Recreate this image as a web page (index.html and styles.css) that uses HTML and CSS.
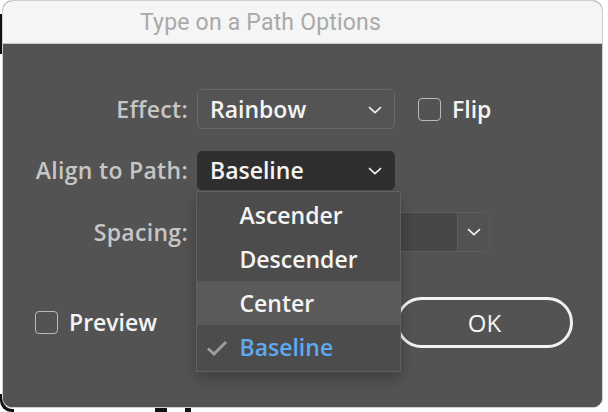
FILE: index.html
```html
<!DOCTYPE html>
<html>
<head>
<meta charset="utf-8">
<link rel="stylesheet" href="styles.css">
</head>
<body>
<div class="desk">
  <div class="art art-a"></div>
  <div class="art art-b"></div>
  <div class="art art-c"></div>
  <div class="art art-d"></div>
  <div class="window">
    <div class="titlebar"><span class="title">Type on a Path Options</span></div>
    <div class="content">
      <div class="form">
        <label class="lbl">Effect:</label>
        <div class="select">
          <span class="val">Rainbow</span>
          <svg class="chev" width="14" height="8" viewBox="0 0 14 8"><path d="M1 1.2 L7 6.6 L13 1.2" fill="none" stroke="#f2f2f2" stroke-width="1.6"/></svg>
        </div>
        <div class="check"><span class="box"></span><span class="ctext">Flip</span></div>

        <label class="lbl">Align to Path:</label>
        <div class="select dark anchor">
          <span class="val">Baseline</span>
          <svg class="chev" width="14" height="8" viewBox="0 0 14 8"><path d="M1 1.2 L7 6.6 L13 1.2" fill="none" stroke="#f2f2f2" stroke-width="1.6"/></svg>
          <ul class="menu">
            <li class="item">Ascender</li>
            <li class="item">Descender</li>
            <li class="item hover">Center</li>
            <li class="item sel"><svg class="tick" width="22" height="16" viewBox="0 0 22 16"><path d="M2 8.5 L8 14 L20 2" fill="none" stroke="#9d9d9d" stroke-width="3"/></svg>Baseline</li>
          </ul>
        </div>
        <div></div>

        <label class="lbl">Spacing:</label>
        <div class="combo">
          <span class="cinput"></span>
          <span class="cbtn"><svg width="14" height="8" viewBox="0 0 14 8"><path d="M1 1.2 L7 6.6 L13 1.2" fill="none" stroke="#f2f2f2" stroke-width="1.6"/></svg></span>
        </div>
        <div></div>
      </div>
      <div class="footer">
        <div class="check"><span class="box"></span><span class="ctext">Preview</span></div>
        <button class="ok">OK</button>
      </div>
    </div>
  </div>
</div>
</body>
</html>
```

FILE: styles.css
```css
* { box-sizing: border-box; }
html, body { margin: 0; padding: 0; background: #ffffff; }
body { width: 608px; height: 412px; overflow: hidden; font-family: "Open Sans", "Noto Sans", sans-serif; }

.desk { position: relative; width: 608px; height: 412px; padding: 0 0 0 2px; }

.art { position: absolute; background: #111; }
.art-a { left: 0; top: 14px; width: 2px; height: 40px; }
.art-b { left: 155px; top: 406px; width: 12px; height: 6px; border-radius: 3px 3px 0 0; }
.art-c { left: 185px; top: 408px; width: 6px; height: 4px; }
.art-d { left: 0; top: 394px; width: 14px; height: 18px; background: transparent; border-left: 3px solid #111; border-bottom: 3px solid #111; border-radius: 0 0 0 12px; }

.window {
  position: relative;
  width: 601px;
  height: 408px;
  border-radius: 10px;
  overflow: hidden;
  border: 1px solid #cfcfcf;
  background: #535353;
  display: flex;
  flex-direction: column;
}

.titlebar {
  height: 43px;
  flex: none;
  background: #f5f5f5;
  border-bottom: 1px solid #c9c9c9;
  display: flex;
  align-items: center;
  padding-left: 137px;
}
.title {
  font-family: "Roboto", "Inter", sans-serif;
  font-size: 23px;
  color: #a9a9a9;
  letter-spacing: 0.2px;
}

.content {
  flex: 1;
  background: #535353;
  padding-top: 45px;
  display: flex;
  flex-direction: column;
}

.form {
  display: grid;
  grid-template-columns: 185px 198px auto;
  column-gap: 9px;
  row-gap: 22px;
  align-items: center;
}

.lbl {
  justify-self: end;
  color: #c6c6c6;
  font-size: 23px;
  font-weight: 600;
  letter-spacing: 0.3px;
  line-height: 1;
}

.select {
  height: 40px;
  border: 1.5px solid #676767;
  border-radius: 5px;
  background: #545454;
  display: flex;
  align-items: center;
  justify-content: space-between;
  padding: 0 12px 0 12px;
}
.select.dark {
  background: #2f2f2f;
  border-color: #2f2f2f;
  height: 39px;
}
.val { color: #f4f4f4; font-size: 23px; font-weight: 600; line-height: 1; }
.chev { flex: none; margin-top: 1px; }

.anchor { position: relative; }

.check {
  display: flex;
  align-items: center;
  gap: 11px;
}
.form .check { margin-left: 14px; }
.box {
  width: 23px;
  height: 23px;
  border: 1.5px solid #b8b8b8;
  border-radius: 4px;
  flex: none;
}
.ctext { color: #f4f4f4; font-size: 23px; font-weight: 600; line-height: 1; }

.combo {
  width: 293px;
  height: 40px;
  border: 1.5px solid #5d5d5d;
  border-radius: 5px;
  display: flex;
  overflow: hidden;
}
.cinput { flex: 1; background: #474747; }
.cbtn {
  width: 32px;
  flex: none;
  background: #525252;
  border-left: 1.5px solid #5d5d5d;
  display: flex;
  align-items: center;
  justify-content: center;
}

.footer {
  display: flex;
  align-items: center;
  margin-top: 45px;
  padding-left: 32px;
}
.ok {
  margin-left: auto;
  margin-right: 29px;
  width: 177px;
  height: 51px;
  border: 3px solid #f2f2f2;
  border-radius: 26px;
  background: transparent;
  color: #f4f4f4;
  font-family: "Open Sans", "Noto Sans", sans-serif;
  font-size: 24px;
  font-weight: 500;
  padding: 0;
}

.menu {
  position: absolute;
  left: -2.5px;
  top: 39px;
  width: 205px;
  margin: 0;
  padding: 1px 0 2px;
  list-style: none;
  background: #4c4c4c;
  border: 1.5px solid #606060;
  box-shadow: 0 6px 14px rgba(0,0,0,0.25);
  z-index: 5;
}
.item {
  height: 44px;
  display: flex;
  align-items: center;
  padding-left: 43px;
  color: #f4f4f4;
  font-size: 23px;
  font-weight: 600;
  position: relative;
}
.item.hover { background: #5a5a5a; }
.item.sel { color: #5eaaf0; }
.tick { position: absolute; left: 9px; top: 15px; }
```
